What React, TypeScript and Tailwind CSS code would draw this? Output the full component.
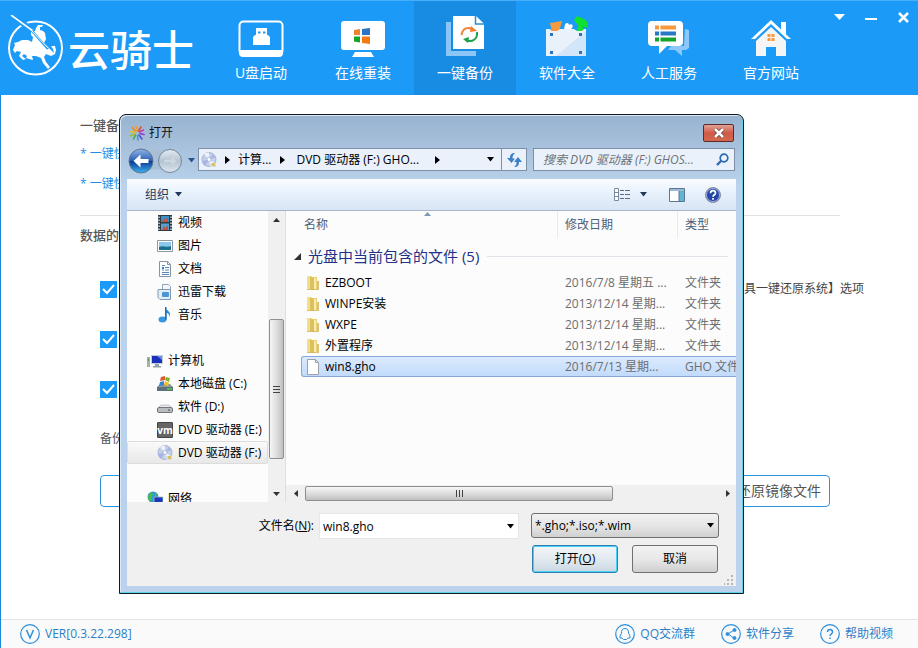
import type { ReactNode } from "react";

/* ---------- small glyphs ---------- */

function Triangle({ dir, className = "" }: { dir: "up" | "down" | "left" | "right"; className?: string }) {
  const shapes = {
    up: { w: 7, h: 4, d: "M0 4 3.5 0 7 4z" },
    down: { w: 9, h: 5, d: "M1 0h7L4.5 4.500z" },
    left: { w: 4, h: 7, d: "M4 0v7L0 3.500z" },
    right: { w: 5, h: 8, d: "M0 0v8L5 4z" },
  } as const;
  const s = shapes[dir];
  return (
    <svg width={s.w} height={s.h} viewBox={`0 0 ${s.w} ${s.h}`} fill="currentColor" className={`shrink-0 ${className}`} aria-hidden="true">
      <path d={s.d} />
    </svg>
  );
}

/* ---------- header icons ---------- */

function KnightLogo() {
  return (
    <svg width="58" height="66" viewBox="8 15 58 66" aria-hidden="true" className="shrink-0">
      <circle cx="35.500" cy="48" r="26.500" fill="none" stroke="#fff" strokeWidth="2" />
      <path d="m15 17 15 12" stroke="#1c9af8" strokeWidth="6" />
      <path d="m11 15 22 16" stroke="#fff" strokeWidth="1.600" fill="none" />
      <path
        fill="#fff"
        d="M13 50 15 45 14 43 18 42 22 40 28 40 32 42 33 37 31 35 31 32 35 31 36 28 38 25 43 25 42 27 40 27 40 30 43 31 45 33 46 39 44 43 48 47 51 50 54 53 53 49 51 46 55 46 56 50 55 54 51 56 46 54 44 57 46 62 50 67 48 69 43 63 41 58 36 56 32 56 33 60 29 59 26 58 27 56 24 54 22 56 26 59 23 60 19 56 21 52 17 51 15 53z"
      />
      <path d="m32 31 16 18" stroke="#1c9af8" strokeWidth="2.200" />
      <path d="m31 30 17 18" stroke="#fff" strokeWidth="1" />
    </svg>
  );
}

function UsbIcon() {
  return (
    <svg width="46" height="37" viewBox="0 0 46 37" aria-hidden="true">
      <rect x="1.500" y="1.500" width="43" height="33" rx="4" fill="none" stroke="#fff" strokeWidth="2" />
      <path d="M1 30h44v3a4 4 0 0 1-4 4H5a4 4 0 0 1-4-4z" fill="#fff" />
      <path d="M18 8h11v7H18zM15 17l2-2h13l2 2v8H15z" fill="#fff" />
      <path d="M20 11.500h2.500v2H20zM25 11.500h2.500v2H25z" fill="#1c9af8" />
    </svg>
  );
}

function MonitorIcon() {
  return (
    <svg width="44" height="37" viewBox="0 0 44 37" aria-hidden="true">
      <rect width="44" height="29" rx="3" fill="#fff" y="1" />
      <path d="M14 32h16l3 5H11z" fill="#fff" />
      <path d="m13 10 6-1v6h-6z" fill="#f08232" />
      <path d="m21 9 8-1v7h-8z" fill="#2a76c4" />
      <path d="M13 16.500h6v6l-6-1z" fill="#18a12b" />
      <path d="M21 16.500h8v7.500l-8-1z" fill="#f27a13" />
    </svg>
  );
}

function BackupIcon() {
  return (
    <svg width="38" height="41" viewBox="0 0 38 41" aria-hidden="true">
      <path d="M0 6h5v29h25v5H0z" fill="#8cc6f7" />
      <path d="M7 0h23l8 8v25H7z" fill="#fff" />
      <path d="M29.500 0v8H38" fill="#fff" stroke="#2b8dd8" strokeWidth="1.500" />
      <path d="M15.500 19c1-7 7-9 12-5" fill="none" stroke="#f0802f" strokeWidth="2" />
      <path d="m25 10 6 5-7 1z" fill="#f0802f" />
      <path d="M31 16c1 7-5 11-11 8" fill="none" stroke="#1ca24a" strokeWidth="2" />
      <path d="m23 21-6 2 5 4z" fill="#1ca24a" />
    </svg>
  );
}

function SoftwareIcon() {
  return (
    <svg width="44" height="41" viewBox="0 0 44 41" aria-hidden="true">
      <path d="m5 7 12-2-3 11H7z" fill="#f79a3e" />
      <path d="M20 9c1-3 4-2 4 0 2-2 5 0 3 3l-4 4-4-4z" fill="#fff" />
      <path d="m32 0 7 3c4 2 4 6 3 9l-4-2v5h-7c3-4 3-6 0-8l-2-3z" fill="#10e032" />
      <path d="M1 13h4l2 2h5l3-2h14l3 2h5l2-2h2v27H1z" fill="#e9f1fb" />
      <path d="M41 15v25H11z" fill="#d2e5f9" />
      <g fill="#2a76b8">
        <rect x="5" y="17" width="3" height="3" /><rect x="34" y="17" width="3" height="3" />
        <rect x="5" y="35" width="3" height="3" /><rect x="34" y="35" width="3" height="3" />
      </g>
    </svg>
  );
}

function ServiceIcon() {
  return (
    <svg width="42" height="37" viewBox="0 0 42 37" aria-hidden="true">
      <path d="M37 9l4 1v18l-3 2h-4v6l-7-6h-7l3-4h13z" fill="#8cc8fb" />
      <path d="M4 1h27a4 4 0 0 1 4 4v17a4 4 0 0 1-4 4H19l-8 8v-8H4a4 4 0 0 1-4-4V5a4 4 0 0 1 4-4z" fill="#fff" />
      <path d="M7 5.500h4v4H7zM12.500 5.500H28v4H12.500z" fill="#f79a3e" />
      <path d="M7 11.500h4v4H7zM12.500 11.500H28v4H12.500z" fill="#2677c4" />
      <path d="M7 17.500h4v4H7zM12.500 17.500H28v4H12.500z" fill="#16a32c" />
    </svg>
  );
}

function HomeIcon() {
  return (
    <svg width="40" height="38" viewBox="0 0 40 38" aria-hidden="true">
      <path d="M30 3h5v14l-5-5z" fill="#fff" />
      <path d="M20 1 0 20h4L20 5l16 15h4z" fill="#fff" />
      <path d="M20 8 5 22v15h10V28h10v9h10V22z" fill="#f5f5f5" />
      <path d="M16.500 15h3v3h-3zM20.500 15h3v3h-3zM16.500 19h3v3h-3zM20.500 19h3v3h-3z" fill="#f79a3e" />
    </svg>
  );
}

const tabs: { label: string; icon: ReactNode; active?: boolean }[] = [
  { label: "U盘启动", icon: <UsbIcon /> },
  { label: "在线重装", icon: <MonitorIcon /> },
  { label: "一键备份", icon: <BackupIcon />, active: true },
  { label: "软件大全", icon: <SoftwareIcon /> },
  { label: "人工服务", icon: <ServiceIcon /> },
  { label: "官方网站", icon: <HomeIcon /> },
];

function Header() {
  return (
    <header className="flex h-[95px] shrink-0 border-t border-[#47aef9] bg-[#1c9af8] text-white">
      <div className="flex w-[210px] shrink-0 items-center pl-2">
        <KnightLogo />
        <span className="ml-[2px] font-['Noto_Sans_CJK_SC',sans-serif] text-[42px] leading-[42px] font-medium whitespace-nowrap">云骑士</span>
      </div>
      <nav className="flex">
        {tabs.map((t) => (
          <button
            key={t.label}
            type="button"
            className={`flex w-[102px] flex-col items-center text-sm leading-5 ${t.active ? "bg-[#188ce2]" : ""}`}
          >
            <span className="flex h-[62px] items-end justify-center pb-[6px]">{t.icon}</span>
            {t.label}
          </button>
        ))}
      </nav>
      <div className="ml-auto flex h-8 items-center gap-5 pr-[9px]">
        <button type="button" aria-label="菜单" className="flex w-3 justify-center">
          <svg width="11" height="6" viewBox="0 0 11 6" fill="#fff"><path d="M0 0h11L5.500 6z" /></svg>
        </button>
        <button type="button" aria-label="最小化" className="flex w-3 justify-center pt-1">
          <svg width="12" height="3" viewBox="0 0 12 3" fill="#fff"><path d="M0 0h12v2H0z" /></svg>
        </button>
        <button type="button" aria-label="关闭程序" className="flex w-3 justify-center">
          <svg width="11" height="11" viewBox="0 0 11 11" stroke="#fff" strokeWidth="2.500"><path d="m1 1 9 9M10 1 1 10" /></svg>
        </button>
      </div>
    </header>
  );
}

/* ---------- page behind the dialog ---------- */

function CheckRow({ id, label }: { id: string; label: string }) {
  return (
    <div className="flex h-[50px] items-center justify-between pr-[54px] pl-5">
      <span className="relative flex">
        <input id={id} type="checkbox" defaultChecked className="peer size-[17px] appearance-none bg-[#c9d3dc] checked:bg-[#1c9af8]" />
        <svg viewBox="0 0 17 17" className="pointer-events-none absolute inset-0 size-[17px]" fill="none" stroke="#fff" strokeWidth="2">
          <path d="m3 8 4 4 7-8" />
        </svg>
      </span>
      <label htmlFor={id} className="text-[#444]">{label}</label>
    </div>
  );
}

function BackupPage() {
  return (
    <main className="flex grow flex-col pt-5 pl-[79px] text-xs leading-5">
      <h2 className="text-[13px] leading-5 font-medium text-[#555]">一键备份</h2>
      <p className="pt-[9px] text-[#1c8fe8]">* 一键快速</p>
      <p className="pt-[10px] text-[#1c8fe8]">* 一键快速</p>
      <hr className="mt-[21px] mr-[78px] border-[#e2e2e2]" />
      <h2 className="pt-[9px] text-[13px] leading-5 font-medium text-[#555]">数据的备份</h2>
      <div className="mt-[19px]">
        <CheckRow id="opt-menu" label="工具一键还原系统】选项" />
        <CheckRow id="opt-restart" label="" />
        <CheckRow id="opt-clean" label="" />
      </div>
      <p className="pt-[15px] pl-5 text-[#555]">备份</p>
      <div className="mt-[26px] mr-[88px] ml-5 flex justify-between">
        <button type="button" aria-label="一键备份" className="h-8 w-[200px] rounded border border-[#2e93dd] bg-white" />
        <button type="button" className="h-8 w-[200px] rounded border border-[#2e93dd] bg-white pr-2 text-right text-sm text-[#555]">还原镜像文件</button>
      </div>
    </main>
  );
}

function Ring({ children }: { children: ReactNode }) {
  return (
    <svg width="20" height="20" viewBox="0 0 20 20" fill="none" stroke="#2a8fdd" aria-hidden="true">
      <circle cx="10" cy="10" r="9.300" strokeWidth="1.200" />
      {children}
    </svg>
  );
}

function Footer() {
  return (
    <footer className="flex h-[29px] shrink-0 items-center border-t border-[#dfe3e3] bg-[#fafafa] pr-[25px] pl-[19px] text-xs leading-5 text-[#2a7fc8]">
      <span className="flex items-center gap-[5px]">
        <Ring><path d="m6.500 6 3.500 8 3.500-8" strokeWidth="1.500" /></Ring>
        VER[0.3.22.298]
      </span>
      <nav className="ml-auto flex gap-[26px]">
        <a href="#qq" className="flex items-center gap-[5px]">
          <Ring><path d="M10 4.500c-3 0-3.500 2-3.500 4.500L5 12v2h2l1.500 1.500h3L13 14h2v-2l-1.500-3c0-2.500-.5-4.500-3.500-4.500z" /></Ring>
          QQ交流群
        </a>
        <a href="#share" className="flex items-center gap-[5px]">
          <Ring><path d="m13 6-6 4 6 4" /><circle cx="13.500" cy="6" r="1.500" fill="#2a8fdd" /><circle cx="6.500" cy="10" r="1.500" fill="#2a8fdd" /><circle cx="13.500" cy="14" r="1.500" fill="#2a8fdd" /></Ring>
          软件分享
        </a>
        <a href="#help" className="flex items-center gap-[5px]">
          <Ring><path d="M7.500 8c0-3.500 5-3.500 5 0 0 2-2.500 2-2.500 4M10 13.500V15" strokeWidth="1.500" /></Ring>
          帮助视频
        </a>
      </nav>
    </footer>
  );
}

/* ---------- dialog icons ---------- */

function DiscIcon() {
  return (
    <svg width="16" height="16" viewBox="0 0 16 16" aria-hidden="true" className="shrink-0">
      <circle cx="8" cy="7.500" r="7" fill="#c5cfe8" stroke="#98a8d0" strokeWidth=".8" />
      <path d="M8 7.500 3 2a7 7 0 0 1 5-1.500zM8 7.500 14 11a7 7 0 0 1-5 4z" fill="#eef2fc" />
      <path d="M8 7.500 1 9l1 3 2 2zM8 7.500 14.500 5 12 2z" fill="#a9b4e4" />
      <circle cx="8" cy="7.500" r="2" fill="#fff" stroke="#9fb0d6" strokeWidth=".8" />
      <path d="M9 11h6v4H9z" fill="#d4dce4" />
      <path d="M11 11h3v3h-3z" fill="#d8c064" />
    </svg>
  );
}

function BurstIcon() {
  return (
    <svg width="16" height="16" viewBox="0 0 16 16" fill="none" strokeWidth="1.500" strokeLinecap="round" aria-hidden="true">
      <path d="M8 6 7 1" stroke="#e8a020" /><path d="m9.500 6 2.500-4" stroke="#e04a30" /><path d="m10.500 7 4-2" stroke="#c63aa0" />
      <path d="m11 8.500 4 1" stroke="#8a3ac8" /><path d="m10 10 3 4" stroke="#4a4ad8" /><path d="m8.500 10.500.5 4.500" stroke="#4a90d8" />
      <path d="m6.500 10-2 4" stroke="#40a850" /><path d="m5.500 9-4 2" stroke="#98c030" /><path d="m5.500 7.500-4-1" stroke="#e8c020" /><path d="M6 6 3.500 2.500" stroke="#f08030" />
    </svg>
  );
}

function FilmIcon() {
  return (
    <svg width="16" height="16" viewBox="0 0 16 16" aria-hidden="true">
      <path d="M1 0h14v16H1z" fill="#2c3a44" />
      <path d="M4 1h8v6H4z" fill="#3f8fc8" /><path d="M4 8.500h8v6.500H4z" fill="#58a0d0" />
      <path d="m5 7 2-4 1 2 3-3v5zM5 15l2-4 1 2 3-3v5z" fill="#c5533d" />
      <path d="M2 1.500v14M14 1.500v14" stroke="#fff" strokeWidth="1.200" strokeDasharray="1.500 1.500" />
    </svg>
  );
}

function PictureIcon() {
  return (
    <svg width="16" height="16" viewBox="0 0 16 16" aria-hidden="true">
      <path d="M.5 2.500h15v11H.5z" fill="#fff" stroke="#8a9aa4" />
      <path d="M2 4h12v5H2z" fill="#8ac8ee" /><path d="M2 9c4-2 8 1 12-1v4H2z" fill="#1f6e8c" />
    </svg>
  );
}

function DocumentIcon() {
  return (
    <svg width="16" height="16" viewBox="0 0 16 16" aria-hidden="true">
      <path d="M2.500.5h8l3 3v12h-11z" fill="#fff" stroke="#8795a3" />
      <path d="M10.500.5v3h3" fill="none" stroke="#8795a3" />
      <path d="M5 4.500h3M8 6.500h4M5 9h2M8 9h4M5 11.500h7M5 13.500h7" stroke="#5a86b8" />
      <path d="M5 6h2v2H5z" fill="#3b7cc0" />
    </svg>
  );
}

function DownloadIcon() {
  return (
    <svg width="16" height="16" viewBox="0 0 16 16" aria-hidden="true">
      <path d="M5.500.5h6l2 2v9h-8z" fill="#f4f8fc" stroke="#8fa4b6" />
      <path d="M1.500 5.500h12v10H3l-2-2v-8z" fill="#e3edf6" stroke="#7d9ab4" />
      <rect x="5" y="8" width="7" height="5" rx="1" fill="#4d96d6" />
    </svg>
  );
}

function MusicIcon() {
  return (
    <svg width="16" height="16" viewBox="0 0 16 16" aria-hidden="true">
      <path d="M8 0c1 4 7 4 4.500 10C12.500 7 11 6 9.500 6v6.500H8z" fill="#2f8bd6" />
      <ellipse cx="5.500" cy="12.500" rx="4" ry="3" fill="#3a97df" />
      <path d="M8 0h1.500v12.500H8z" fill="#1d6fb8" />
    </svg>
  );
}

function ComputerIcon() {
  return (
    <svg width="16" height="16" viewBox="0 0 16 16" aria-hidden="true">
      <path d="M0 4h3v10H0z" fill="#9fb4a8" /><path d="M1 6h1v2H1z" fill="#4a9a40" />
      <path d="M4 2h12v9H4z" fill="#c4ccd4" /><path d="M5 3h10v7H5z" fill="#1b2fbe" /><path d="M10 3h5v4z" fill="#6b8bea" />
      <path d="M8 11h4v2H8zM6 13h8v1.500H6z" fill="#93a0aa" />
    </svg>
  );
}

function SystemDriveIcon() {
  return (
    <svg width="16" height="16" viewBox="0 0 16 16" aria-hidden="true">
      <path d="m2 9 2-1h9l3 3v4H0v-4z" fill="#8c9aa0" /><path d="M0 11h16v4H0z" fill="#5e7078" /><path d="M10 12h5v2h-5z" fill="#55b84a" />
      <path d="m4 1 4-1v4L3 5z" fill="#e4572e" /><path d="m9 1 4 1-1 4-4-2z" fill="#78b82a" />
      <path d="m3 6 4-1v4L2 10z" fill="#3484d2" /><path d="m8 5 4 2-1 3-4-1z" fill="#f4c020" />
    </svg>
  );
}

function DriveIcon() {
  return (
    <svg width="16" height="16" viewBox="0 0 16 16" aria-hidden="true">
      <path d="m1 9 3-3h8l3 3z" fill="#e6e8ea" stroke="#a4a8ac" strokeWidth=".6" />
      <rect x=".5" y="8.500" width="15" height="5" rx="1.500" fill="#b9bdc1" stroke="#74787c" />
      <path d="M11 10.500h2v1h-2z" fill="#4a4e52" />
    </svg>
  );
}

function VmIcon() {
  return (
    <span className="flex size-4 items-center justify-center rounded-[1px] border border-[#444] bg-[#666] text-[10px] leading-none font-bold text-white">
      vm
    </span>
  );
}

function NetworkIcon() {
  return (
    <svg width="16" height="16" viewBox="0 0 16 16" aria-hidden="true">
      <circle cx="6" cy="6" r="5.500" fill="#2f9ad8" /><path d="M2 3c3-3 5 0 3 2s1 3-1 5-4-4-2-7zM8 1l3 3-3 1z" fill="#4cbb48" />
      <path d="M7 6h9v7H7z" fill="#1b38b8" stroke="#aab6cc" strokeWidth=".8" /><path d="M9 13h5v2H9z" fill="#8a98a8" />
    </svg>
  );
}

function FolderIcon() {
  return (
    <svg width="16" height="16" viewBox="0 0 16 16" aria-hidden="true" className="shrink-0">
      <path d="M2 1h4v14l-4-1z" fill="#f2df8e" /><path d="M7 2h5v12l-5 1z" fill="#ead070" /><path d="M12 6h2v8h-2z" fill="#d8c27a" />
      <path d="m5 1 4 2v12l-4-1z" fill="#dcc05a" /><path d="M9 3h2v11H9z" fill="#f8ecb4" />
      <path d="M2 14.500h12" fill="none" stroke="#cdb256" strokeWidth=".8" />
    </svg>
  );
}

function FileIcon() {
  return (
    <svg width="16" height="16" viewBox="0 0 16 16" aria-hidden="true" className="shrink-0">
      <path d="M2.500.5h8l3 3v12h-11z" fill="#fff" stroke="#9aa3ad" /><path d="M10.500.5v3h3" fill="none" stroke="#9aa3ad" />
    </svg>
  );
}

/* ---------- dialog ---------- */

function AddressBar() {
  return (
    <div className="flex h-[31px] items-start pl-[1px]">
      <svg width="56" height="26" viewBox="0 0 56 26" aria-hidden="true" className="shrink-0">
        <defs>
          <linearGradient id="back" x1="0" y1="0" x2="0" y2="1">
            <stop offset="0" stopColor="#8fb4e4" /><stop offset=".48" stopColor="#2b62b8" /><stop offset=".52" stopColor="#0b3a94" /><stop offset="1" stopColor="#3fb4f0" />
          </linearGradient>
          <linearGradient id="fwd" x1="0" y1="0" x2="0" y2="1">
            <stop offset="0" stopColor="#e4ebf2" /><stop offset=".5" stopColor="#b4c4d2" /><stop offset="1" stopColor="#dde6ee" />
          </linearGradient>
        </defs>
        <path d="M13 1h29c7 0 12 5 12 12s-5 12-12 12c-6 0-7-4-14-4S19 25 13 25z" fill="#a9bfd6" />
        <circle cx="13" cy="13" r="12" fill="url(#back)" stroke="#5c7490" />
        <path d="m5.500 13 7-6.500v4.500h8v4h-8v4.500z" fill="#fff" />
        <circle cx="42" cy="13" r="11.500" fill="url(#fwd)" stroke="#73879b" />
        <path d="m49 13-6-5.500v4h-7v3h7v4z" fill="#cdd8e2" stroke="#b9c6d3" strokeWidth=".6" />
      </svg>
      <button type="button" aria-label="最近位置" className="flex h-6 w-[14px] items-center justify-center text-[#27538c]">
        <Triangle dir="down" />
      </button>
      <div className="flex h-[23px] w-[329px] shrink-0 items-center border border-[#7c90a8] bg-[#eaf1fa] text-xs leading-5 text-black">
        <span className="ml-[2px] flex"><DiscIcon /></span>
        <Triangle dir="right" className="ml-2" />
        <button type="button" className="ml-2">计算...</button>
        <Triangle dir="right" className="ml-[9px]" />
        <button type="button" className="ml-[11px] whitespace-nowrap">DVD 驱动器 (F:) GHO...</button>
        <Triangle dir="right" className="ml-4" />
        <button type="button" aria-label="以前的位置" className="ml-auto px-[6px]"><Triangle dir="down" /></button>
        <button type="button" aria-label="刷新" className="flex h-full w-[25px] items-center justify-center border-l border-[#7c90a8]">
          <svg width="15" height="14" viewBox="0 0 15 14" fill="#3d7fc8">
            <path d="M8 0C4 0 3 2 3 5H0l4.500 5L8 5.500H5.500C5.500 3 6 2 8 0z" />
            <path d="M7 14c4 0 5-2 5-5h3l-4-5-4 5h2.500c0 2.500-.5 3.500-2.500 5z" />
          </svg>
        </button>
      </div>
      <label className="mr-[1px] ml-[6px] flex h-[23px] min-w-0 grow items-center border border-[#7c90a8] bg-[#eaf1fa] pr-[5px] pl-[9px]">
        <input
          type="text"
          aria-label="搜索"
          placeholder="搜索 DVD 驱动器 (F:) GHOS..."
          className="min-w-0 grow bg-transparent text-xs italic outline-none placeholder:text-[#6b7178]"
        />
        <svg width="13" height="13" viewBox="0 0 13 13" fill="none" stroke="#2a6ab0" aria-hidden="true" className="shrink-0">
          <circle cx="8" cy="5" r="3.800" strokeWidth="1.700" /><path d="M5.500 7.500 1 12" strokeWidth="2.400" />
        </svg>
      </label>
    </div>
  );
}

function Toolbar() {
  return (
    <div className="flex h-8 items-center border-b border-[#a3b6cc] bg-linear-to-b from-[#fafcff] via-[#e6f0fb] via-50% to-[#d9e5f4] pr-[15px] pl-[18px] text-xs text-[#1e395b]">
      <button type="button" className="flex items-center gap-[5px]">组织 <Triangle dir="down" /></button>
      <button type="button" aria-label="更改视图" className="ml-auto flex items-center gap-[9px]">
        <svg width="16" height="13" viewBox="0 0 16 13" aria-hidden="true">
          <path d="M.5.500h4v12h-4zM.5 4.500h4M.5 8.500h4" fill="#fff" stroke="#7a8a9c" />
          <path d="M6 2.500h4M11 2.500h5M6 6.500h4M11 6.500h5M6 10.500h4M11 10.500h5" stroke="#5b6b80" />
        </svg>
        <Triangle dir="down" />
      </button>
      <button type="button" aria-label="预览窗格" className="ml-[21px]">
        <svg width="16" height="14" viewBox="0 0 16 14" className="block"><path d="M.5.500h15v13H.5z" fill="#fff" stroke="#5a7894" /><path d="M1 1h14v2H1z" fill="#9dbad4" /><path d="M10 3h5v10h-5z" fill="#62b5cf" /><path d="M10 3v10" stroke="#5a7894" /></svg>
      </button>
      <button type="button" aria-label="帮助" className="ml-5">
        <svg width="16" height="16" viewBox="0 0 16 16" className="block"><circle cx="8" cy="8" r="7.500" fill="#2446a8" stroke="#8a94a8" /><circle cx="8" cy="8" r="6.500" fill="none" stroke="#c3cde4" strokeWidth=".8" /><path d="M5.500 6.200c0-3.400 5-3.400 5 0 0 1.600-2.500 1.600-2.500 3.600M8 11v1.800" fill="none" stroke="#fff" strokeWidth="1.700" /></svg>
      </button>
    </div>
  );
}

const places: { label: string; icon: ReactNode; root?: boolean; spaced?: boolean; selected?: boolean }[] = [
  { label: "视频", icon: <FilmIcon /> },
  { label: "图片", icon: <PictureIcon /> },
  { label: "文档", icon: <DocumentIcon /> },
  { label: "迅雷下载", icon: <DownloadIcon /> },
  { label: "音乐", icon: <MusicIcon /> },
  { label: "计算机", icon: <ComputerIcon />, root: true, spaced: true },
  { label: "本地磁盘 (C:)", icon: <SystemDriveIcon /> },
  { label: "软件 (D:)", icon: <DriveIcon /> },
  { label: "DVD 驱动器 (E:)", icon: <VmIcon /> },
  { label: "DVD 驱动器 (F:)", icon: <DiscIcon />, selected: true },
  { label: "网络", icon: <NetworkIcon />, root: true, spaced: true },
];

function Sidebar() {
  return (
    <ul className="w-[141px] shrink-0 overflow-hidden bg-[#fcfcfc] text-xs text-black">
      {places.map((p) => (
        <li key={p.label} className={p.spaced ? "pt-[23px]" : ""}>
          <button
            type="button"
            className={`flex h-[23px] w-full items-center gap-[5px] border whitespace-nowrap ${p.root ? "pl-[19px]" : "pl-[29px]"} ${
              p.selected ? "rounded-[2px] border-[#dcdcdc] bg-linear-to-b from-[#fafafa] to-[#e8e8e8]" : "border-transparent"
            }`}
          >
            {p.icon}
            {p.label}
          </button>
        </li>
      ))}
    </ul>
  );
}

function VerticalScroll() {
  return (
    <div className="flex w-[17px] shrink-0 flex-col items-center bg-[#f0f0f0] text-[#333]">
      <button type="button" aria-label="向上滚动" className="flex h-[17px] items-center"><Triangle dir="up" /></button>
      <div className="mt-[91px] flex h-[140px] w-[15px] flex-col items-center justify-center gap-[2px] rounded-[2px] border border-[#8f8f8f] bg-linear-to-r from-[#f6f6f6] via-[#dedede] to-[#bfbfbf]">
        <i className="h-px w-[7px] bg-[#444]" />
        <i className="h-px w-[7px] bg-[#444]" />
        <i className="h-px w-[7px] bg-[#444]" />
      </div>
      <button type="button" aria-label="向下滚动" className="mt-auto flex h-[17px] items-center">
        <svg width="7" height="4" viewBox="0 0 7 4" fill="currentColor"><path d="M0 0h7L3.500 4z" /></svg>
      </button>
    </div>
  );
}

const files = [
  { name: "EZBOOT", date: "2016/7/8 星期五 ...", type: "文件夹" },
  { name: "WINPE安装", date: "2013/12/14 星期...", type: "文件夹" },
  { name: "WXPE", date: "2013/12/14 星期...", type: "文件夹" },
  { name: "外置程序", date: "2013/12/14 星期...", type: "文件夹" },
  { name: "win8.gho", date: "2016/7/13 星期...", type: "GHO 文件", selected: true },
];

function FilePane() {
  return (
    <div className="flex min-w-0 grow flex-col overflow-hidden border-l border-[#d5e0ec] bg-[#fcfcfc]">
      <div className="relative flex grow flex-col overflow-hidden pl-[15px]">
        <Triangle dir="up" className="absolute top-[1px] left-[138px] text-[#7a9ab4]" />
        <table className="w-full table-fixed border-separate border-spacing-0 text-left text-xs leading-5 whitespace-nowrap">
          <colgroup>
            <col />
            <col className="w-[120px]" />
            <col className="w-[58px]" />
          </colgroup>
          <thead className="text-[#4c607a]">
            <tr className="h-[27px]">
              <th className="border-r border-[#e6ebf2] p-0 pl-[3px] font-normal">名称</th>
              <th className="border-r border-[#e6ebf2] p-0 pl-[7px] font-normal">修改日期</th>
              <th className="p-0 pl-[7px] font-normal">类型</th>
            </tr>
          </thead>
          <tbody>
            <tr className="h-[34px]">
              <td colSpan={3} className="p-0 pt-[2px]">
                <div className="-ml-[7px] flex items-center pr-2">
                  <svg width="7" height="7" viewBox="0 0 7 7" fill="#333" aria-hidden="true"><path d="M7 0v7H0z" /></svg>
                  <span className="ml-[7px] text-[15px] text-[#1e3287]">光盘中当前包含的文件 (5)</span>
                  <i className="ml-2 h-px grow bg-[#dfe2e8]" />
                </div>
              </td>
            </tr>
            {files.map((f) => {
              const cell = f.selected
                ? "overflow-hidden border-y border-[#84a9d8] bg-linear-to-b from-[#dceafc] to-[#c1dbfc] p-0"
                : "overflow-hidden p-0";
              return (
                <tr key={f.name} className="h-[21px]">
                  <td className={`${cell} text-black ${f.selected ? "rounded-l-[3px] border-l pl-[3px]" : "pl-1"}`}>
                    <span className="flex h-[19px] items-center gap-[4px]">
                      {f.selected ? <FileIcon /> : <FolderIcon />}
                      {f.name}
                    </span>
                  </td>
                  <td className={`${cell} text-[#6d6d6d]`}><span className="flex h-[19px] items-center pl-[7px]">{f.date}</span></td>
                  <td className={`${cell} text-[#6d6d6d]`}><span className="flex h-[19px] items-center pl-[7px]">{f.type}</span></td>
                </tr>
              );
            })}
          </tbody>
        </table>
      </div>
      <div className="flex h-[17px] shrink-0 items-center bg-[#f0f0f0] text-[#333]">
        <button type="button" aria-label="向左滚动" className="flex w-[19px] justify-center"><Triangle dir="left" /></button>
        <div className="flex h-[15px] w-[308px] items-center justify-center gap-[2px] rounded-[2px] border border-[#8f8f8f] bg-linear-to-b from-[#f6f6f6] via-[#dedede] to-[#bfbfbf]">
          <i className="h-[7px] w-px bg-[#444]" />
          <i className="h-[7px] w-px bg-[#444]" />
          <i className="h-[7px] w-px bg-[#444]" />
        </div>
        <button type="button" aria-label="向右滚动" className="ml-auto flex w-[17px] justify-center">
          <svg width="4" height="7" viewBox="0 0 4 7" fill="currentColor"><path d="M0 0v7l4-3.500z" /></svg>
        </button>
      </div>
    </div>
  );
}

function FileForm() {
  return (
    <form className="flex h-[84px] flex-col bg-[#f0f0f0] pt-[11px] pr-[17px] text-xs text-black">
      <div className="flex h-[26px] items-start justify-end">
        <label htmlFor="file-name" className="mr-[5px] leading-[26px]">文件名(<u>N</u>):</label>
        <span className="relative flex">
          <input id="file-name" type="text" defaultValue="win8.gho" className="h-[26px] w-[200px] border border-[#e3e6ea] bg-white pl-[3px] outline-none" />
          <Triangle dir="down" className="pointer-events-none absolute top-[11px] right-1" />
        </span>
        <span className="relative ml-3 flex">
          <select aria-label="文件类型" defaultValue="img" className="h-[25px] w-[188px] appearance-none rounded-[3px] border border-[#707070] bg-linear-to-b from-[#f2f2f2] via-[#e6e6e6] to-[#d0d0d0] pl-[3px]">
            <option value="img">*.gho;*.iso;*.wim</option>
          </select>
          <Triangle dir="down" className="pointer-events-none absolute top-[10px] right-1" />
        </span>
      </div>
      <div className="mt-[6px] mr-px flex justify-end gap-[14px]">
        <button type="button" className="h-7 w-[86px] rounded-[3px] border border-[#2c7fae] bg-linear-to-b from-[#f2f5f7] via-[#e2eaf0] to-[#cbd8e2] shadow-[inset_0_0_0_1px_#48d0f8]">
          打开(<u>O</u>)
        </button>
        <button type="button" className="h-7 w-[86px] rounded-[3px] border border-[#707070] bg-linear-to-b from-[#f2f2f2] via-[#e8e8e8] to-[#cfcfcf]">取消</button>
      </div>
      <svg width="10" height="10" viewBox="0 0 10 10" fill="#b4b8bc" aria-hidden="true" className="mt-[2px] -mr-[15px] self-end">
        <path d="M7 0h2v2H7zM7 4h2v2H7zM3 4h2v2H3zM7 8h2v2H7zM3 8h2v2H3zM0 8h1v2H0z" />
      </svg>
    </form>
  );
}

function OpenDialog() {
  return (
    <section
      role="dialog"
      aria-label="打开"
      className="absolute top-[114px] left-[119px] flex w-[625px] flex-col rounded-t-[7px] border border-[#101820] bg-[#b9d1ea] bg-linear-to-b from-[#98b3d0] to-[#bad2eb] to-[70px] px-[7px] pb-[7px] shadow-[inset_-1px_-1px_0_#5fd4e8,inset_1px_1px_0_#dce8f4]"
    >
      <div className="flex h-[33px] items-center pt-[2px] text-xs text-[#111]">
        <span className="ml-[2px] flex"><BurstIcon /></span>
        <h1 className="ml-1">打开</h1>
        <button type="button" aria-label="关闭" className="mr-[2px] ml-auto flex h-[18px] w-[31px] items-center justify-center rounded-[2px] border border-[#5c2a2c] bg-linear-to-b from-[#e0a094] via-[#cf5a45] to-[#d2694f]">
          <svg width="12" height="10" viewBox="0 0 12 10"><path d="m2 1 8 8M10 1 2 9" stroke="#6b3a3a" strokeWidth="4" /><path d="m2 1 8 8M10 1 2 9" stroke="#fff" strokeWidth="2.500" /></svg>
        </button>
      </div>
      <AddressBar />
      <Toolbar />
      <div className="flex h-[291px]">
        <Sidebar />
        <VerticalScroll />
        <FilePane />
      </div>
      <FileForm />
    </section>
  );
}

export default function App() {
  return (
    <div className="relative flex min-h-screen flex-col overflow-hidden bg-white font-['Open_Sans','Noto_Sans_CJK_SC',sans-serif]">
      <Header />
      <div className="flex grow flex-col border-l border-[#1c86d8]">
        <BackupPage />
        <Footer />
      </div>
      <OpenDialog />
    </div>
  );
}
